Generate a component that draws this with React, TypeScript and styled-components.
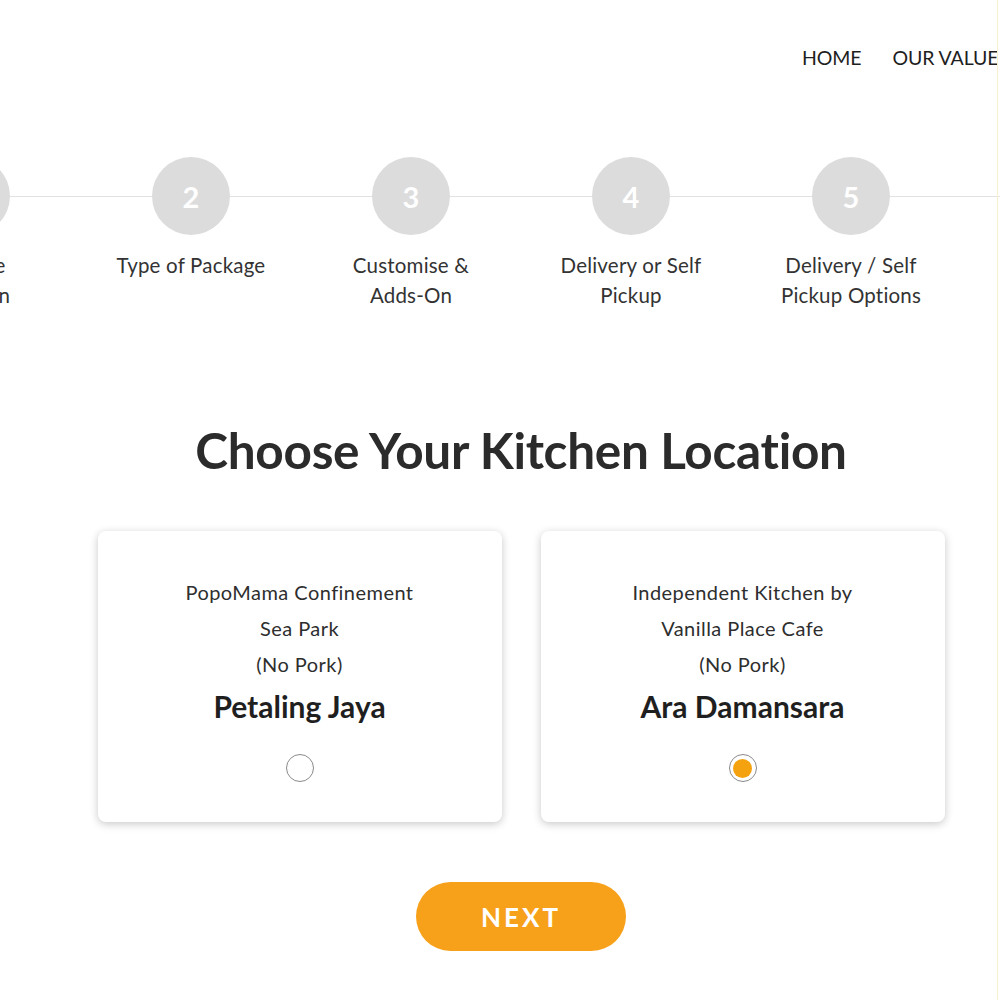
import React, { useState } from 'react';
import styled, { createGlobalStyle } from 'styled-components';

const GlobalStyle = createGlobalStyle`
  html, body {
    margin: 0;
    padding: 0;
    background: #ffffff;
    overflow: hidden;
  }
  body {
    font-family: Lato, "Open Sans", "Liberation Sans", sans-serif;
    color: #333333;
  }
`;

interface StepDef {
  num: number;
  lines: string[];
}

interface Kitchen {
  id: string;
  lines: string[];
  area: string;
}

const STEPS: StepDef[] = [
  { num: 1, lines: ['Choose', 'Location'] },
  { num: 2, lines: ['Type of Package'] },
  { num: 3, lines: ['Customise &', 'Adds-On'] },
  { num: 4, lines: ['Delivery or Self', 'Pickup'] },
  { num: 5, lines: ['Delivery / Self', 'Pickup Options'] },
  { num: 6, lines: ['Summary'] }
];

const KITCHENS: Kitchen[] = [
  { id: 'pj', lines: ['PopoMama Confinement', 'Sea Park', '(No Pork)'], area: 'Petaling Jaya' },
  { id: 'ara', lines: ['Independent Kitchen by', 'Vanilla Place Cafe', '(No Pork)'], area: 'Ara Damansara' }
];

const Page = styled.div`
  width: 1042px;
  min-height: 1000px;
  position: relative;
`;

const EdgeLine = styled.div`
  position: fixed;
  top: 0;
  right: 2px;
  width: 1px;
  height: 100%;
  background: #f8f2cc;
`;

const Header = styled.header`
  display: flex;
  gap: 31px;
  padding: 46px 0 0 802px;
  height: 54px;
  white-space: nowrap;
`;

const NavLink = styled.a`
  font-size: 19.5px;
  line-height: 24px;
  color: #1e1e1e;
  text-decoration: none;
  letter-spacing: -0.1px;
`;

const Stepper = styled.ol`
  position: relative;
  display: flex;
  list-style: none;
  margin: 57px 0 0 -139px;
  padding: 0;
  width: 1320px;

  &::before {
    content: '';
    position: absolute;
    left: 0;
    right: 0;
    top: 39px;
    height: 1px;
    background: #e2e2e2;
  }
`;

const Step = styled.li`
  position: relative;
  width: 220px;
  flex: 0 0 220px;
  display: flex;
  flex-direction: column;
  align-items: center;
`;

const StepCircle = styled.div`
  width: 78px;
  height: 78px;
  border-radius: 50%;
  background: #dcdcdc;
  color: #ffffff;
  font-size: 29px;
  font-weight: 700;
  display: flex;
  align-items: center;
  justify-content: center;
`;

const StepLabel = styled.div`
  margin-top: 15px;
  font-size: 20.5px;
  line-height: 30px;
  letter-spacing: 0.2px;
  color: #333333;
  text-align: center;
  white-space: nowrap;
`;

const Title = styled.h1`
  margin: 111px 0 0;
  text-align: center;
  font-size: 49.5px;
  line-height: 58px;
  font-weight: 700;
  color: #2b2b2b;
  letter-spacing: -0.3px;
`;

const CardRow = styled.div`
  display: flex;
  justify-content: center;
  gap: 39px;
  margin-top: 52px;
`;

const Card = styled.label`
  width: 404px;
  box-sizing: border-box;
  padding: 43px 20px 40px;
  background: #ffffff;
  border-radius: 8px;
  box-shadow: 0 2px 8px rgba(0, 0, 0, 0.22);
  display: flex;
  flex-direction: column;
  align-items: center;
  cursor: pointer;
`;

const CardLine = styled.div`
  font-size: 20px;
  line-height: 36px;
  letter-spacing: 0.45px;
  color: #2e2e2e;
`;

const Area = styled.div`
  margin-top: 6px;
  font-size: 30px;
  line-height: 36px;
  font-weight: 700;
  color: #1f1f1f;
`;

const Radio = styled.span<{ $checked: boolean }>`
  margin-top: 30px;
  width: 28px;
  height: 28px;
  box-sizing: border-box;
  border-radius: 50%;
  border: 1.5px solid #8a8a8a;
  display: flex;
  align-items: center;
  justify-content: center;

  &::after {
    content: '';
    width: 19px;
    height: 19px;
    border-radius: 50%;
    background: ${(p) => (p.$checked ? '#f4a20f' : 'transparent')};
  }
`;

const Actions = styled.div`
  display: flex;
  justify-content: center;
  margin-top: 60px;
`;

const NextButton = styled.button`
  width: 210px;
  height: 69px;
  border: none;
  border-radius: 35px;
  background: #f7a11b;
  color: #ffffff;
  font-family: Lato, "Open Sans", "Liberation Sans", sans-serif;
  font-size: 26px;
  font-weight: 700;
  letter-spacing: 3px;
  cursor: pointer;
`;

function App (): React.ReactElement {
  const [selected, setSelected] = useState('ara');

  return (
    <>
      <GlobalStyle />
      <Page>
        <Header>
          <NavLink href='#'>HOME</NavLink>
          <NavLink href='#'>OUR VALUE</NavLink>
          <NavLink href='#'>MENU</NavLink>
        </Header>
        <Stepper>
          {STEPS.map((step) => (
            <Step key={step.num}>
              <StepCircle>{step.num}</StepCircle>
              <StepLabel>
                {step.lines.map((line) => <div key={line}>{line}</div>)}
              </StepLabel>
            </Step>
          ))}
        </Stepper>
        <Title>Choose Your Kitchen Location</Title>
        <CardRow>
          {KITCHENS.map((k) => (
            <Card
              key={k.id}
              onClick={() => setSelected(k.id)}
            >
              {k.lines.map((line) => <CardLine key={line}>{line}</CardLine>)}
              <Area>{k.area}</Area>
              <Radio
                $checked={selected === k.id}
                role='radio'
                aria-checked={selected === k.id}
              />
            </Card>
          ))}
        </CardRow>
        <Actions>
          <NextButton>NEXT</NextButton>
        </Actions>
      </Page>
      <EdgeLine />
    </>
  );
}

export default App;
